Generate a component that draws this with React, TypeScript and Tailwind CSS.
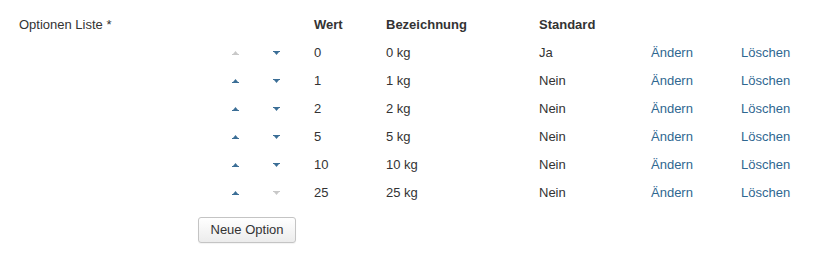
import React from "react";

const rows = [
  { w: "0", b: "0 kg", s: "Ja", up: false, down: true },
  { w: "1", b: "1 kg", s: "Nein", up: true, down: true },
  { w: "2", b: "2 kg", s: "Nein", up: true, down: true },
  { w: "5", b: "5 kg", s: "Nein", up: true, down: true },
  { w: "10", b: "10 kg", s: "Nein", up: true, down: true },
  { w: "25", b: "25 kg", s: "Nein", up: true, down: false },
];

function Up({ on }: { on: boolean }) {
  return (
    <svg width="7" height="4" viewBox="0 0 7 4" className={on ? "text-[#3b6e96]" : "text-[#c8c8c8]"}>
      <path d="M3.5 0 L6 3 L1 3 Z" fill="currentColor" />
      <rect x="0" y="3" width="7" height="1" fill="currentColor" />
    </svg>
  );
}

function Down({ on }: { on: boolean }) {
  return (
    <svg width="7" height="4" viewBox="0 0 7 4" className={on ? "text-[#3b6e96]" : "text-[#c8c8c8]"}>
      <rect x="0" y="0" width="7" height="1" fill="currentColor" />
      <path d="M1 1 L6 1 L3.5 4 Z" fill="currentColor" />
    </svg>
  );
}

export default function App() {
  return (
    <div
      className="w-[813px] h-[267px] bg-white text-[#333333] text-[13px] leading-[28px] flex pt-[11px]"
      style={{ fontFamily: '"Liberation Sans", Arial, sans-serif' }}
    >
      <div className="w-[198px] pl-[19px] shrink-0">Optionen Liste *</div>
      <div className="flex flex-col">
        <div className="grid grid-cols-[75px_41px_72px_153px_112px_90px_80px]">
          <div></div>
          <div></div>
          <div className="font-bold">Wert</div>
          <div className="font-bold">Bezeichnung</div>
          <div className="font-bold">Standard</div>
          <div></div>
          <div></div>
          {rows.map((r, i) => (
            <React.Fragment key={i}>
              <div className="h-[28px] flex items-center pl-[34px]">
                <Up on={r.up} />
              </div>
              <div className="h-[28px] flex items-center">
                <Down on={r.down} />
              </div>
              <div>{r.w}</div>
              <div>{r.b}</div>
              <div>{r.s}</div>
              <div className="text-[#2f6791]">Ändern</div>
              <div className="text-[#2f6791]">Löschen</div>
            </React.Fragment>
          ))}
        </div>
        <div className="mt-[9px]">
          <button className="w-[98px] h-[26px] border border-[#c4c4c4] rounded-[3px] bg-gradient-to-b from-white to-[#ececec] text-[#333333] text-[13px] leading-[24px] shadow-[0_1px_1px_rgba(0,0,0,0.05)]">
            Neue Option
          </button>
        </div>
      </div>
    </div>
  );
}
